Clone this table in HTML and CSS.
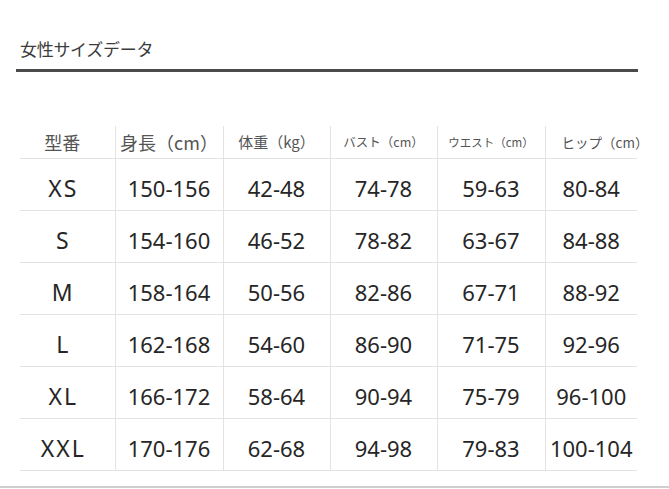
FILE: index.html
```html
<!DOCTYPE html>
<html lang="ja">
<head>
<meta charset="utf-8">
<link rel="stylesheet" href="styles.css">
</head>
<body>
<div class="page">
  <h1 class="title">女性サイズデータ</h1>
  <div class="rule"></div>
  <table class="size">
    <thead>
      <tr>
        <th class="h1">型番</th>
        <th class="h2">身長（cm）</th>
        <th class="h3">体重（kg）</th>
        <th class="h4">バスト（cm）</th>
        <th class="h5">ウエスト（cm）</th>
        <th class="h6"><span class="shift">ヒップ（cm）</span></th>
      </tr>
    </thead>
    <tbody>
      <tr><td>XS</td><td>150-156</td><td>42-48</td><td>74-78</td><td>59-63</td><td>80-84</td></tr>
      <tr><td>S</td><td>154-160</td><td>46-52</td><td>78-82</td><td>63-67</td><td>84-88</td></tr>
      <tr><td>M</td><td>158-164</td><td>50-56</td><td>82-86</td><td>67-71</td><td>88-92</td></tr>
      <tr><td>L</td><td>162-168</td><td>54-60</td><td>86-90</td><td>71-75</td><td>92-96</td></tr>
      <tr><td>XL</td><td>166-172</td><td>58-64</td><td>90-94</td><td>75-79</td><td>96-100</td></tr>
      <tr><td>XXL</td><td>170-176</td><td>62-68</td><td>94-98</td><td>79-83</td><td>100-104</td></tr>
    </tbody>
  </table>
  <div class="edge"></div>
</div>
</body>
</html>
```
FILE: styles.css
```css
html, body {
  margin: 0;
  padding: 0;
  background: #ffffff;
}
.page {
  width: 669px;
  height: 489px;
  position: relative;
  overflow: hidden;
  font-family: "Noto Sans", "Noto Sans CJK JP", sans-serif;
}
.title {
  margin: 0;
  padding: 38px 0 0 20px;
  height: 32px;
  box-sizing: content-box;
  font-family: "Noto Sans CJK JP", sans-serif;
  font-weight: 400;
  font-size: 17px;
  line-height: 22px;
  color: #3c3c3c;
  letter-spacing: -0.3px;
}
.rule {
  margin: -1px 0 0 16px;
  width: 622px;
  height: 3px;
  background: #4a4a4a;
}
.size {
  margin: 54px 0 0 20px;
  border-collapse: collapse;
  table-layout: fixed;
  width: 617px;
}
.size th, .size td {
  padding: 0;
  text-align: center;
  white-space: nowrap;
  border-bottom: 1px solid #e3e3e3;
  box-sizing: border-box;
}
.size th + th, .size td + td {
  border-left: 1px solid #e3e3e3;
}
.size th {
  height: 32px;
  font-family: "Noto Sans CJK JP", sans-serif;
  font-weight: 400;
  color: #555555;
  vertical-align: middle;
  overflow: visible;
}
.size th:nth-child(1) { width: 95px; padding-right: 10px; }
.size th:nth-child(2) { width: 108px; }
.size th:nth-child(3) { width: 107px; }
.size th:nth-child(4) { width: 107px; }
.size th:nth-child(5) { width: 108px; }
.size th:nth-child(6) { width: 92px; }
.h1 { font-size: 18px; }
.h2 { font-size: 18px; }
.h3 { font-size: 15px; }
.h4 { font-size: 12.5px; }
.h5 { font-size: 11.5px; }
.h6 { font-size: 13.5px; }
.shift {
  margin-left: 16px;
}
.size td {
  height: 52px;
  font-size: 22px;
  color: #262626;
  padding-top: 7px;
}
.size td:first-child {
  padding-right: 8px;
  font-size: 23px;
  letter-spacing: 2px;
}
.edge {
  position: absolute;
  left: 0;
  right: 0;
  top: 486px;
  height: 2px;
  background: #cfcfcf;
}
```
